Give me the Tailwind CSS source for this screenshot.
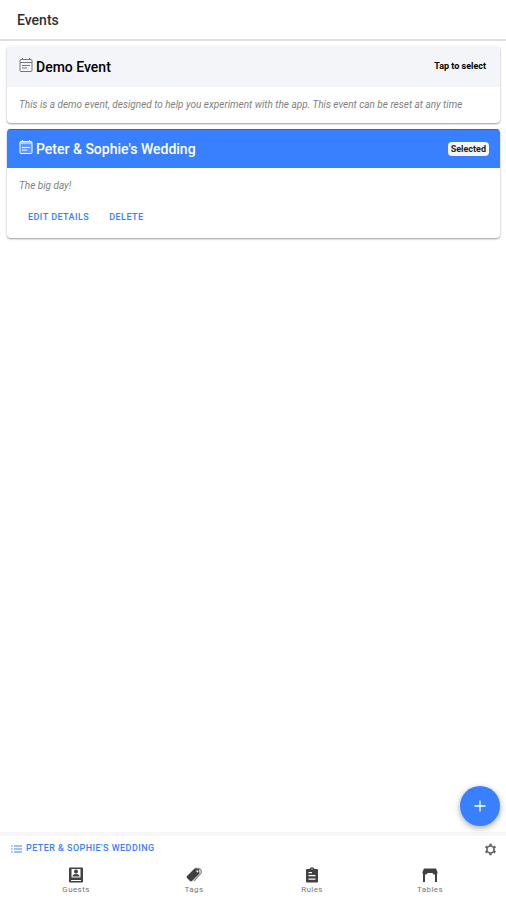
<!DOCTYPE html>
<html lang="en">
  <head>
    <meta charset="UTF-8" />
    <meta name="viewport" content="width=device-width, initial-scale=1.0" />
    <title>Events</title>
    <script src="https://cdn.jsdelivr.net/npm/@tailwindcss/browser@4"></script>
  </head>
  <body class="flex flex-col h-screen bg-white font-[Roboto,sans-serif] text-black">
    <header class="shrink-0 h-[41px] px-[17px] flex items-center border-b-2 border-[#dfdfdf]">
      <h1 class="text-sm font-medium text-[#303030]">Events</h1>
    </header>

    <main class="flex-1 overflow-y-auto pl-[7px] pr-[6px] pt-[5px]">
      <!-- demo event -->
      <section class="rounded-sm overflow-hidden shadow-[0_1px_2px_rgba(0,0,0,0.4)]">
        <div class="flex items-center justify-between h-[41px] pl-3 pr-[14px] bg-[#f4f5f8]">
          <h2 class="flex items-center gap-[3px] text-sm font-medium">
            <svg class="size-[14px] mb-1 text-[#777]" viewBox="0 0 14 14" fill="none" stroke="currentColor">
              <rect x="1" y="1.500" width="12" height="12" rx="1" />
              <path d="M1 4.500h12M3.500 0v2M10.500 0v2M3 7.500h8M3 10h5" />
            </svg>
            Demo Event
          </h2>
          <button type="button" class="text-[9px] font-bold">Tap to select</button>
        </div>
        <p class="px-3 py-3 text-[10px] leading-3 italic text-[#808080]">
          This is a demo event, designed to help you experiment with the app. This event can be reset at any time
        </p>
      </section>

      <!-- selected event -->
      <section class="mt-[6px] rounded-sm overflow-hidden shadow-[0_1px_2px_rgba(0,0,0,0.4)]">
        <div class="flex items-center justify-between h-[39px] pl-3 pr-[11px] bg-[#3880ff] border-t border-[#1b6ee8] text-white">
          <h2 class="flex items-center gap-[3px] text-sm font-medium">
            <svg class="size-[14px] mb-1" viewBox="0 0 14 14" fill="none" stroke="currentColor">
              <rect x="1" y="1.500" width="12" height="12" rx="1" fill="currentColor" fill-opacity="0.2" />
              <path d="M1 3h12M3.500 0v2M10.500 0v2M3 7.500h8M3 10h5" />
            </svg>
            Peter &amp; Sophie's Wedding
          </h2>
          <span class="px-[3px] rounded-sm bg-[#f4f5f8] text-[9px] leading-[14px] font-bold text-[#222]">Selected</span>
        </div>
        <div class="px-3 pt-3 pb-[14px]">
          <p class="text-[10px] leading-3 italic text-[#808080]">The big day!</p>
          <div class="flex gap-5 mt-[18px] px-[9px] text-[9px] leading-[14px] font-medium tracking-wider text-[#3880ff]">
            <button type="button">EDIT DETAILS</button>
            <button type="button">DELETE</button>
          </div>
        </div>
      </section>
    </main>

    <button
      type="button"
      aria-label="Add event"
      class="fixed right-[6px] bottom-[74px] size-10 rounded-full bg-[#3880ff] text-white flex items-center justify-center shadow-[0_2px_6px_rgba(0,0,0,0.35)]"
    >
      <svg class="size-3" viewBox="0 0 12 12" fill="none" stroke="currentColor" stroke-width="1.300">
        <path d="M6 0.500v11M0.500 6h11" />
      </svg>
    </button>

    <footer class="shrink-0 border-t-4 border-[#f7f7f7]">
      <div class="flex items-center justify-between h-[26px] pl-[11px] pr-[9px]">
        <a href="#" class="flex items-center gap-1 text-[9px] font-medium tracking-wider text-[#3880ff]">
          <svg class="w-[11px] h-2" viewBox="0 0 11 8" fill="none" stroke="currentColor" stroke-width="1">
            <path d="M3 1h8M3 4h8M3 7h8M0 1h1.500M0 4h1.500M0 7h1.500" />
          </svg>
          PETER &amp; SOPHIE'S WEDDING
        </a>
        <button type="button" aria-label="Settings" class="text-[#666]">
          <!-- cog: six teeth around an open ring -->
          <svg class="size-[13px]" viewBox="0 0 24 24" fill="none" stroke="currentColor">
            <circle cx="12" cy="12" r="6.500" stroke-width="3" />
            <path stroke-width="4.500" d="M12 1.500v4M12 18.500v4M2.900 6.700l3.500 2M17.600 15.300l3.500 2M2.900 17.300l3.500-2M17.600 8.700l3.500-2" />
          </svg>
        </button>
      </div>
      <nav class="grid grid-cols-4 h-[38px] px-[17px] pt-[5px] text-[8px] leading-[10px] tracking-wider text-[#777]">
        <a href="#" class="flex flex-col items-center gap-[2px]">
          <svg class="size-4 text-[#404040]" viewBox="0 0 16 16" fill="currentColor">
            <path fill-rule="evenodd" d="M2 0.500h12q1 0 1 1v13q0 1-1 1H2q-1 0-1-1v-13q0-1 1-1zM3.500 2v8.500h9V2zM3 13v1h10v-1z" />
            <circle cx="8" cy="4.500" r="2" />
            <path d="M4.500 9.500q0-2.500 3.500-2.500t3.500 2.500z" />
          </svg>
          Guests
        </a>
        <a href="#" class="flex flex-col items-center gap-[2px]">
          <svg class="size-4" viewBox="0 0 16 16" fill="none">
            <path d="M9 1.500h4q2.500 1 2.500 4L8 14" stroke="#999" stroke-width="1.500" />
            <path fill-rule="evenodd" fill="#404040" d="M8.500 1.500L13 2l.5 4.500-7.500 7.500q-1 .8-2 0L1 11q-.8-1 0-2zM11.300 3.300a1 1 0 1 0 .1 0z" />
          </svg>
          Tags
        </a>
        <a href="#" class="flex flex-col items-center gap-[2px]">
          <svg class="size-4 text-[#404040]" viewBox="0 0 16 16" fill="currentColor">
            <path fill-rule="evenodd" d="M3 2h2.500q.5-1.800 2.500-1.800t2.500 1.800H13q1 0 1 1v11.500q0 1-1 1H3q-1 0-1-1V3q0-1 1-1zM4.500 5v1.200H8V5zM4.500 8v1.200h7V8zM4.500 11.500v1.200h7v-1.200zM7.500 1.500v1h1v-1z" />
          </svg>
          Rules
        </a>
        <a href="#" class="flex flex-col items-center gap-[2px]">
          <svg class="size-4 text-[#404040]" viewBox="0 0 16 16" fill="currentColor">
            <path d="M2 1.500h12L15.500 5v1.500H15V15h-2V7.500h-1.500L10.500 6h-5l-1 1.500H3V15H1V6.500H.5V5z" />
          </svg>
          Tables
        </a>
      </nav>
    </footer>
  </body>
</html>
